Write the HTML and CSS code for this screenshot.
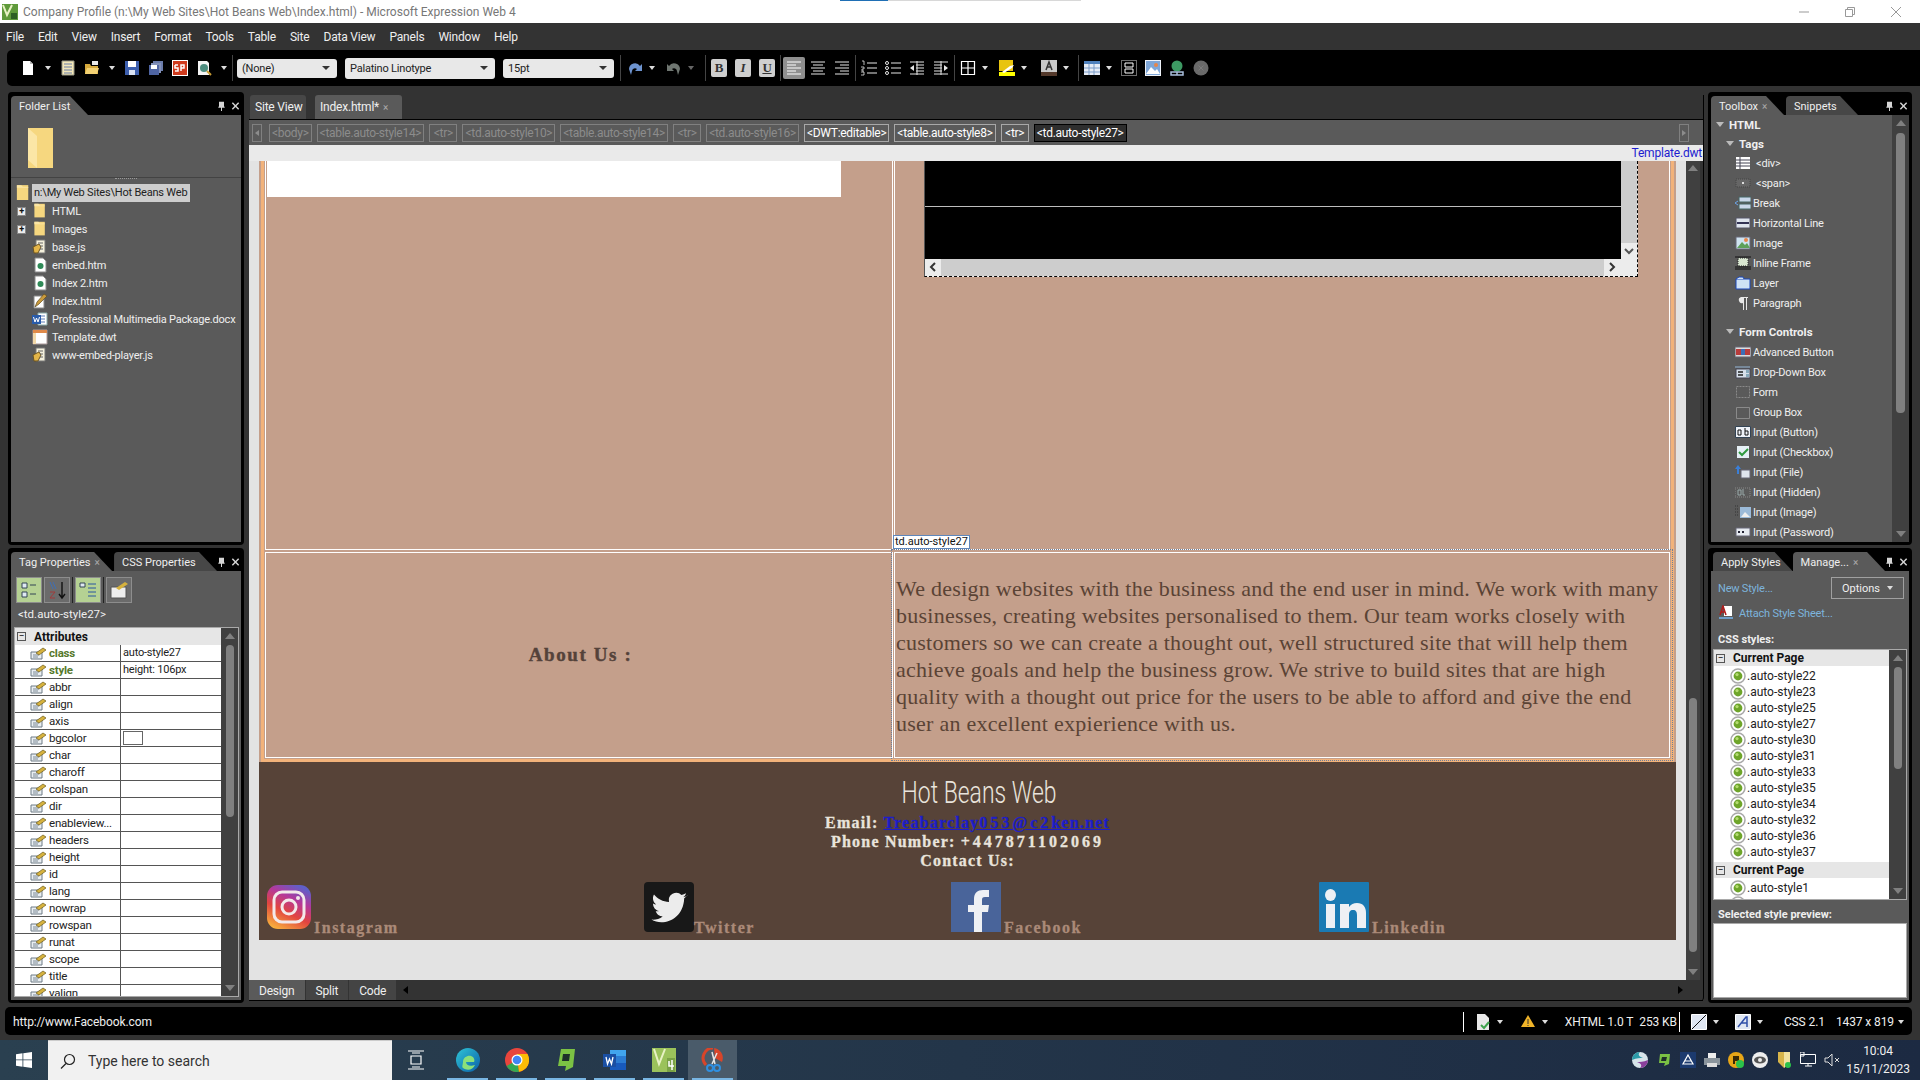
FILE: index.html
```html
<!DOCTYPE html>
<html>

<head>
    <meta charset="utf-8">
    <title>Company Profile - Microsoft Expression Web 4</title>
    <link rel="stylesheet" href="styles.css">
</head>

<body>
    <svg class="defs" aria-hidden="true">
        <symbol id="folder" viewBox="0 0 16 20"><path d="M1 1h13v17H1z" fill="#f6d77f" /><path d="M1 1h5l2 2h6v1H1z" fill="#fbe6a6" /></symbol>
        <symbol id="script" viewBox="0 0 16 16"><path d="M4 1h9v13H4z" fill="#f4f0dc" stroke="#777" /><path d="M1 8l6-3 2 3-3 6H2z" fill="#e3b548" stroke="#6b5320" /><path d="M6 4h5M8 7h3M8 10h3" stroke="#666" /></symbol>
        <symbol id="htm" viewBox="0 0 16 16"><path d="M3 1h8l3 3v11H3z" fill="#fff" stroke="#8a8a8a" /><circle cx="8.5" cy="9" r="3" fill="#2f8a57" /></symbol>
        <symbol id="html" viewBox="0 0 16 16"><path d="M2 3h10v12H2z" fill="#fff" stroke="#888" /><path d="M3 14l2-5 7-8 3 2-8 8z" fill="#c99a3c" stroke="#5e4a20" stroke-width=".7" /></symbol>
        <symbol id="docx" viewBox="0 0 16 16"><path d="M6 2h9v12H6z" fill="#fff" stroke="#8aa" /><path d="M8 5h5M8 8h5M8 11h5" stroke="#5a7db8" /><path d="M0 4h9v9H0z" fill="#2a5caa" /><path d="M1.5 6l1.5 5 1.5-4 1.5 4 1.5-5" stroke="#fff" fill="none" /></symbol>
        <symbol id="dwt" viewBox="0 0 16 16"><path d="M1 1h14v14H1z" fill="#fff" stroke="#a99" /><path d="M1 1h14v3H1z" fill="#e08a4a" /><path d="M1 4h3v11H1z" fill="#f3d9a8" /></symbol>
        <symbol id="attr" viewBox="0 0 17 13"><path d="M1 5h11v7H1z" fill="#e9eef2" stroke="#6d7a85" /><path d="M3 8h6M3 10h5" stroke="#7c8a96" /><path d="M6 6l7-5 3 2-7 5z" fill="#d6b23e" stroke="#6a5a1e" stroke-width=".7" /></symbol>
        <symbol id="ball" viewBox="0 0 16 16"><circle cx="8" cy="8" r="7" fill="#fff" stroke="#a9a9a9" stroke-width="1.5" /><circle cx="8" cy="8" r="4.4" fill="#6ea52a" /><circle cx="7" cy="6.6" r="1.6" fill="#b5dc71" /></symbol>
        <symbol id="pin" viewBox="0 0 10 12"><path d="M2 1h6v5l1 2H1l1-2zM4.4 8h1.2v4H4.4z" fill="#d5d5d5" /></symbol>
        <symbol id="close" viewBox="0 0 10 10"><path d="M1.5 1.5l7 7M8.5 1.5l-7 7" stroke="#d5d5d5" stroke-width="1.6" /></symbol>
    </svg>

    <div class="title-bar">
        <svg class="app-icon" viewBox="0 0 16 16"><path d="M0 0h16v16H0z" fill="#5f9a3a" /><path d="M1 1l4 10 5-10" fill="none" stroke="#e8f2c4" stroke-width="2" /><path d="M9 9h6v6H9z" fill="#2e5f24" /></svg>
        <span class="title-text">Company Profile (n:\My Web Sites\Hot Beans Web\Index.html) - Microsoft Expression Web 4</span>
        <div class="title-strip"><span class="strip-blue"></span><span class="strip-grey"></span></div>
        <div class="win-buttons">
            <svg viewBox="0 0 10 10"><path d="M0 5h10" stroke="#999" /></svg>
            <svg viewBox="0 0 10 10"><path d="M.5 2.5h7v7h-7zM2.5 2.5v-2h7v7h-2" fill="none" stroke="#999" /></svg>
            <svg viewBox="0 0 10 10"><path d="M0 0l10 10M10 0L0 10" stroke="#999" /></svg>
        </div>
    </div>

    <div class="menu-bar">
        <span>File</span><span>Edit</span><span>View</span><span>Insert</span><span>Format</span><span>Tools</span><span>Table</span><span>Site</span><span>Data View</span><span>Panels</span><span>Window</span><span>Help</span>
    </div>

    <div class="tool-bar">
        <svg class="ic" viewBox="0 0 16 16"><path d="M3 1h7l3 3v11H3z" fill="#fff" /><path d="M10 1v3h3" fill="#bbb" /></svg>
        <i class="ar"></i>
        <svg class="ic" viewBox="0 0 16 16"><path d="M2 1h12v14H2z" fill="#f2e6b8" stroke="#998" /><path d="M4 4h8M4 7h8M4 10h8M4 13h8" stroke="#6a7fa8" /></svg>
        <svg class="ic" viewBox="0 0 16 16"><path d="M1 4h5l1 2h7v8H1z" fill="#d6a93c" /><path d="M3 8h12l-2 6H1z" fill="#f2d173" /><path d="M8 1h6v4H8z" fill="#e8e8e8" /></svg>
        <i class="ar"></i>
        <svg class="ic" viewBox="0 0 16 16"><path d="M1 1h14v14H1z" fill="#3d5fae" /><path d="M4 1h8v6H4z" fill="#fff" /><path d="M5 10h6v5H5z" fill="#d9e2f3" /></svg>
        <svg class="ic" viewBox="0 0 16 16"><path d="M5 1h10v10H5z" fill="#6b7cab" /><path d="M3 3h10v10H3z" fill="#8391b8" /><path d="M1 5h10v10H1z" fill="#4f65a3" /><path d="M3 5h6v4H3z" fill="#fff" /></svg>
        <svg class="ic" viewBox="0 0 16 16"><path d="M0 0h16v16H0z" fill="#fff" /><path d="M1 1h14v14H1z" fill="#d03b1e" /><path d="M3 5h3M3 5v3h3v3H3M9 11V5h3v3H9" fill="none" stroke="#fff" stroke-width="1.5" /></svg>
        <svg class="ic" viewBox="0 0 16 16"><path d="M2 1h9l2 2v12H2z" fill="#f4f4f4" /><circle cx="8" cy="8" r="4" fill="#4d8d7f" /><path d="M11 11l4 4" stroke="#c79b33" stroke-width="2" /></svg>
        <i class="ar"></i>
        <i class="sep sep-file"></i>
        <div class="combo combo-none"><span>(None)</span><i class="ar-dark"></i></div>
        <div class="combo combo-font"><span>Palatino Linotype</span><i class="ar-dark"></i></div>
        <div class="combo combo-size"><span>15pt</span><i class="ar-dark"></i></div>
        <i class="sep sep-size"></i>
        <svg class="ic ic-tight" viewBox="0 0 16 16"><path d="M2 9a6 6 0 0 1 11-3l2-2v7H8l2-2a3 3 0 0 0-5 2l-1 4z" fill="#6d93cf" /></svg>
        <i class="ar ar-wide"></i>
        <svg class="ic ic-tight ic-dim" viewBox="0 0 16 16"><path d="M14 9A6 6 0 0 0 3 6L1 4v7h7L6 9a3 3 0 0 1 5 2l1 4z" fill="#6f7671" /></svg>
        <i class="ar ar-dim ar-wide"></i>
        <i class="sep sep-fmt"></i>
        <span class="fmt fmt-b">B</span><span class="fmt fmt-i">I</span><span class="fmt fmt-u">U</span>
        <i class="sep sep-near"></i>
        <svg class="al al-on" viewBox="0 0 22 22"><path d="M4 5h14M4 8h9M4 11h14M4 14h9M4 17h14" stroke="#fff" /></svg>
        <svg class="ic ic-al" viewBox="0 0 16 16"><path d="M1 2h14M3 5h10M1 8h14M3 11h10M1 14h14" stroke="#e6e6e6" /></svg>
        <svg class="ic" viewBox="0 0 16 16"><path d="M1 2h14M6 5h9M1 8h14M6 11h9M1 14h14" stroke="#e6e6e6" /></svg>
        <i class="sep sep-list"></i>
        <svg class="ic" viewBox="0 0 16 16"><path d="M6 3h10M6 8h10M6 13h10" stroke="#e6e6e6" /><path d="M1 1h2v4M0 7h3v2H1v2h2M0 12h3v3H0" fill="none" stroke="#e6e6e6" stroke-width=".8" /></svg>
        <svg class="ic" viewBox="0 0 16 16"><path d="M6 3h10M6 8h10M6 13h10" stroke="#e6e6e6" /><circle cx="2" cy="3" r="1.5" fill="none" stroke="#e6e6e6" /><circle cx="2" cy="8" r="1.5" fill="none" stroke="#e6e6e6" /><circle cx="2" cy="13" r="1.5" fill="none" stroke="#e6e6e6" /></svg>
        <svg class="ic" viewBox="0 0 16 16"><path d="M1 2h14M7 5h8M7 8h8M7 11h8M1 14h14M8 1v14" stroke="#e6e6e6" /><path d="M5 5L1 8l4 3z" fill="#e6e6e6" /></svg>
        <svg class="ic" viewBox="0 0 16 16"><path d="M1 2h14M1 5h8M1 8h8M1 11h8M1 14h14M8 1v14" stroke="#e6e6e6" /><path d="M11 5l4 3-4 3z" fill="#e6e6e6" /></svg>
        <i class="sep sep-list"></i>
        <svg class="ic ic-tight" viewBox="0 0 16 16"><path d="M1.5 1.5h13v13h-13zM8 1.5v13M1.5 8h13" fill="none" stroke="#fff" stroke-width="1.2" /></svg>
        <i class="ar ar-wide"></i>
        <svg class="ic ic-tight" viewBox="0 0 16 16"><path d="M0 0h14v11H0z" fill="#e8c40f" /><path d="M0 12h16v4H0z" fill="#ff0" /><path d="M5 13l8-5 2-3-4 1-8 6z" fill="#fff" /></svg>
        <i class="ar ar-wider"></i>
        <svg class="ic ic-tight" viewBox="0 0 16 16"><path d="M0 0h16v12H0z" fill="#c9c9c9" /><path d="M0 12h16v4H0z" fill="#54392b" /><path d="M5 10l3-8 3 8M6 7h4" fill="none" stroke="#333" stroke-width="1.5" /></svg>
        <i class="ar ar-wide"></i>
        <i class="sep"></i>
        <svg class="ic ic-tight" viewBox="0 0 16 16"><path d="M0 1h16v14H0z" fill="#e6ecf6" /><path d="M0 1h16v3H0z" fill="#4f81bd" /><path d="M5 4v11M10 4v11M0 8h16M0 12h16" stroke="#7b9cc8" /></svg>
        <i class="ar"></i>
        <svg class="ic" viewBox="0 0 16 16"><path d="M.5.5h15v15H.5z" fill="none" stroke="#ddd" stroke-dasharray="1 1" /><path d="M4 3h8v4H4zM4 9h8v4H4z" fill="none" stroke="#fff" /></svg>
        <svg class="ic" viewBox="0 0 16 16"><path d="M0 0h16v16H0z" fill="#eef2f8" /><path d="M1 1h14v14H1z" fill="#7fa7d8" /><path d="M1 14l5-7 4 4 2-2 3 5z" fill="#fff" /><circle cx="11" cy="5" r="2" fill="#e8864a" /></svg>
        <svg class="ic" viewBox="0 0 16 16"><circle cx="8" cy="6" r="5.5" fill="#3d9a63" /><path d="M2 12h6v3H2zM8 12h6v3H8z" fill="none" stroke="#a9bfdc" stroke-width="1.5" /></svg>
        <svg class="ic" viewBox="0 0 16 16"><circle cx="8" cy="8" r="7.5" fill="#6a6a6a" /><path d="M5.5 5.5l5 5M10.5 5.5l-5 5" stroke="#7c7c7c" /></svg>
    </div>

    <div class="main">
        <div class="side side-left">
            <div class="panel">
                <div class="panel-tabs">
                    <span class="ptab ptab-on ptab-folder">Folder List</span>
                    <span class="ptab-tools"><svg><use href="#pin" /></svg><svg><use href="#close" /></svg></span>
                </div>
                <div class="panel-body folder-body">
                    <div class="folder-top"><svg class="big-folder" viewBox="0 0 28 42"><path d="M1 1l25 0v40H1z" fill="#f6d77f" /><path d="M1 1l9 8v32L1 33z" fill="#fbe6a6" /></svg></div>
                    <div class="grip"></div>
                    <div class="tree">
                        <div class="tree-root"><svg class="ti"><use href="#folder" /></svg><span class="root-label">n:\My Web Sites\Hot Beans Web</span></div>
                        <div class="tree-row"><i class="expand">+</i><svg class="ti"><use href="#folder" /></svg>HTML</div>
                        <div class="tree-row"><i class="expand">+</i><svg class="ti"><use href="#folder" /></svg>Images</div>
                        <div class="tree-row"><svg class="ti"><use href="#script" /></svg>base.js</div>
                        <div class="tree-row"><svg class="ti"><use href="#htm" /></svg>embed.htm</div>
                        <div class="tree-row"><svg class="ti"><use href="#htm" /></svg>Index 2.htm</div>
                        <div class="tree-row"><svg class="ti"><use href="#html" /></svg>Index.html</div>
                        <div class="tree-row"><svg class="ti"><use href="#docx" /></svg>Professional Multimedia Package.docx</div>
                        <div class="tree-row"><svg class="ti"><use href="#dwt" /></svg>Template.dwt</div>
                        <div class="tree-row"><svg class="ti"><use href="#script" /></svg>www-embed-player.js</div>
                    </div>
                </div>
            </div>
            <div class="panel">
                <div class="panel-tabs">
                    <span class="ptab ptab-on ptab-tagprops">Tag Properties <b class="tab-x">×</b></span>
                    <span class="ptab ptab-off ptab-cssprops">CSS Properties</span>
                    <span class="ptab-tools"><svg><use href="#pin" /></svg><svg><use href="#close" /></svg></span>
                </div>
                <div class="panel-body">
                    <div class="prop-tools">
                        <span class="pt pt-on"><svg viewBox="0 0 24 24"><path d="M5 5h5v5H5zM5 14h5v5H5z" fill="#dfe9f2" stroke="#345" /><path d="M13 7h6M13 16h6" stroke="#345" /></svg></span>
                        <span class="pt"><svg viewBox="0 0 24 24"><path d="M5 4l3 7M8 4l3 7" stroke="#3f6fb5" /><path d="M5 14h5l-5 6h5" fill="none" stroke="#a23a3a" /><path d="M17 4v15M14 16l3 4 3-4" fill="none" stroke="#111" stroke-width="1.4" /></svg></span>
                        <i class="pt-sep"></i>
                        <span class="pt pt-on"><svg viewBox="0 0 24 24"><path d="M4 5h5v4H4z" fill="#dfe9f2" stroke="#345" /><path d="M12 6h8M12 10h8M12 14h8M12 18h8" stroke="#2a56a0" /></svg></span>
                        <i class="pt-sep"></i>
                        <span class="pt"><svg viewBox="0 0 24 24"><path d="M4 9h15v11H4z" fill="#eee" stroke="#555" /><path d="M9 10l9-6 3 2-9 6z" fill="#d6b23e" /></svg></span>
                    </div>
                    <div class="sel-tag">&lt;td.auto-style27&gt;</div>
                    <div class="prop-box">
                        <div class="prop-list">
                            <div class="group-head"><i class="minus">−</i>Attributes</div>
                            <div class="prow"><span class="pname set"><svg><use href="#attr" /></svg>class</span><span class="pval">auto-style27</span></div>
                            <div class="prow"><span class="pname set"><svg><use href="#attr" /></svg>style</span><span class="pval">height: 106px</span></div>
                            <div class="prow"><span class="pname"><svg><use href="#attr" /></svg>abbr</span><span class="pval"></span></div>
                            <div class="prow"><span class="pname"><svg><use href="#attr" /></svg>align</span><span class="pval"></span></div>
                            <div class="prow"><span class="pname"><svg><use href="#attr" /></svg>axis</span><span class="pval"></span></div>
                            <div class="prow"><span class="pname"><svg><use href="#attr" /></svg>bgcolor</span><span class="pval"><i class="swatch"></i></span></div>
                            <div class="prow"><span class="pname"><svg><use href="#attr" /></svg>char</span><span class="pval"></span></div>
                            <div class="prow"><span class="pname"><svg><use href="#attr" /></svg>charoff</span><span class="pval"></span></div>
                            <div class="prow"><span class="pname"><svg><use href="#attr" /></svg>colspan</span><span class="pval"></span></div>
                            <div class="prow"><span class="pname"><svg><use href="#attr" /></svg>dir</span><span class="pval"></span></div>
                            <div class="prow"><span class="pname"><svg><use href="#attr" /></svg>enableview...</span><span class="pval"></span></div>
                            <div class="prow"><span class="pname"><svg><use href="#attr" /></svg>headers</span><span class="pval"></span></div>
                            <div class="prow"><span class="pname"><svg><use href="#attr" /></svg>height</span><span class="pval"></span></div>
                            <div class="prow"><span class="pname"><svg><use href="#attr" /></svg>id</span><span class="pval"></span></div>
                            <div class="prow"><span class="pname"><svg><use href="#attr" /></svg>lang</span><span class="pval"></span></div>
                            <div class="prow"><span class="pname"><svg><use href="#attr" /></svg>nowrap</span><span class="pval"></span></div>
                            <div class="prow"><span class="pname"><svg><use href="#attr" /></svg>rowspan</span><span class="pval"></span></div>
                            <div class="prow"><span class="pname"><svg><use href="#attr" /></svg>runat</span><span class="pval"></span></div>
                            <div class="prow"><span class="pname"><svg><use href="#attr" /></svg>scope</span><span class="pval"></span></div>
                            <div class="prow"><span class="pname"><svg><use href="#attr" /></svg>title</span><span class="pval"></span></div>
                            <div class="prow"><span class="pname"><svg><use href="#attr" /></svg>valign</span><span class="pval"></span></div>
                        </div>
                        <div class="vbar vbar-prop"><i class="up"></i><i class="thumb"></i><i class="down"></i></div>
                    </div>
                </div>
            </div>
        </div>

        <div class="editor">
            <div class="doc-tabs">
                <span class="doc-tab">Site View</span>
                <span class="doc-tab doc-tab-on">Index.html* <b class="tab-x">×</b></span>
            </div>
            <div class="crumbs">
                <span class="crumb crumb-arrow"></span>
                <span class="crumb">&lt;body&gt;</span>
                <span class="crumb">&lt;table.auto-style14&gt;</span>
                <span class="crumb crumb-tr">&lt;tr&gt;</span>
                <span class="crumb">&lt;td.auto-style10&gt;</span>
                <span class="crumb">&lt;table.auto-style14&gt;</span>
                <span class="crumb crumb-tr">&lt;tr&gt;</span>
                <span class="crumb">&lt;td.auto-style16&gt;</span>
                <span class="crumb crumb-on">&lt;DWT:editable&gt;</span>
                <span class="crumb crumb-on">&lt;table.auto-style8&gt;</span>
                <span class="crumb crumb-on crumb-tr">&lt;tr&gt;</span>
                <span class="crumb crumb-sel">&lt;td.auto-style27&gt;</span>
                <span class="crumb crumb-end"></span>
            </div>
            <div class="template-row"><span>Template.dwt</span></div>
            <div class="work">
                <div class="canvas">
                    <div class="page">
                        <div class="frame">
                            <div class="cell cell-top-left"><div class="white-block"></div></div>
                            <div class="cell cell-top-right">
                                <div class="embed">
                                    <div class="embed-row">
                                        <div class="embed-video"><i class="embed-line"></i></div>
                                        <div class="embed-vbar"><span class="embed-btn">
                                            <svg viewBox="0 0 10 10"><path d="M1 3l4 4 4-4" fill="none" stroke="#555" stroke-width="2" /></svg></span></div>
                                    </div>
                                    <div class="embed-hbar">
                                        <span class="embed-btn"><svg viewBox="0 0 10 10"><path d="M7 1L3 5l4 4" fill="none" stroke="#333" stroke-width="2" /></svg></span>
                                        <i class="embed-track"></i>
                                        <span class="embed-btn"><svg viewBox="0 0 10 10"><path d="M3 1l4 4-4 4" fill="none" stroke="#333" stroke-width="2" /></svg></span>
                                        <span class="embed-corner"></span>
                                    </div>
                                </div>
                            </div>
                            <div class="cell cell-about">About Us :</div>
                            <div class="cell cell-text">
                                <span class="cell-badge">td.auto-style27</span>
                                <p>We design websites with the business and the end user in mind. We work with many businesses, creating websites personalised to them. Our team works closely with customers so we can create a thought out, well structured site that will help them achieve goals and help the business grow. We strive to build sites that are high quality with a thought out price for the users to be able to afford and give the end user an excellent expierience with us.</p>
                            </div>
                        </div>
                        <div class="footer">
                            <h1 class="brand"><span>Hot Beans Web</span></h1>
                            <div class="contact">Email: <a href="#">Treabarclay<span class="num">053@c2</span>ken.net</a></div>
                            <div class="contact">Phone Number: <span class="num">+447871102069</span></div>
                            <div class="contact">Contact Us:</div>
                            <div class="socials">
                                <div class="social">
                                    <svg class="logo-ig" viewBox="0 0 44 44">
                                        <defs><linearGradient id="iggrad" x1="0.2" y1="1" x2="0.7" y2="0"><stop offset="0" stop-color="#f9b13c" /><stop offset=".4" stop-color="#e2453f" /><stop offset=".7" stop-color="#b5389a" /><stop offset="1" stop-color="#5f5fc8" /></linearGradient></defs>
                                        <rect width="44" height="44" rx="11" fill="url(#iggrad)" />
                                        <rect x="7" y="7" width="30" height="30" rx="8" fill="none" stroke="#f3e9ea" stroke-width="3" />
                                        <circle cx="22" cy="22" r="7" fill="none" stroke="#f3e9ea" stroke-width="3" />
                                        <circle cx="31" cy="13" r="2" fill="#f3e9ea" />
                                    </svg>
                                    <span>Instagram</span>
                                </div>
                                <div class="social social-twitter">
                                    <svg class="logo" viewBox="0 0 50 50">
                                        <rect width="50" height="50" rx="4" fill="#181818" />
                                        <path d="M43 14c-1.500.7-3 1-4 1.200 1.500-1 2.700-2.400 3-4-1.400.8-3 1.400-4.500 1.700A7.500 7.500 0 0 0 25 20c-6-.3-11.500-3.200-15-7.500-2 3.300-1 7.700 2.300 10-1.200 0-2.400-.4-3.300-1 0 3.700 2.500 6.800 6 7.600-1 .3-2.200.3-3.300.1 1 3 3.800 5.200 7 5.200-3.300 2.500-7.400 3.600-11.200 3.200 11.500 7.400 32-.2 32.700-21.400 1.500-1 2.800-2.300 3.800-3.700z" fill="#ececec" />
                                    </svg>
                                    <span>Twitter</span>
                                </div>
                                <div class="social">
                                    <svg class="logo" viewBox="0 0 50 50">
                                        <rect width="50" height="50" fill="#49649a" />
                                        <path d="M23 50V30h-6v-7h6v-6c0-6 3.500-9 9-9h6v7h-4c-2.500 0-3 1-3 3v5h7l-1 7h-6v20z" fill="#eef0f4" />
                                    </svg>
                                    <span>Facebook</span>
                                </div>
                                <div class="social">
                                    <svg class="logo" viewBox="0 0 50 50">
                                        <rect width="50" height="50" rx="1" fill="#1a7ab3" />
                                        <ellipse cx="11.500" cy="13" rx="5.500" ry="6" fill="#eef0f4" />
                                        <path d="M7 22h9v24H7zM21 22h9v3c2-2.500 4.500-4 8-4 6 0 9 4 9 10v15h-9V33c0-3-1-5-4-5s-4 2-4 5v13h-9z" fill="#eef0f4" />
                                    </svg>
                                    <span>Linkedin</span>
                                </div>
                            </div>
                        </div>
                    </div>
                </div>
                <div class="vbar vbar-editor"><i class="up"></i><i class="thumb"></i><i class="down"></i></div>
            </div>
            <div class="view-bar">
                <span class="view view-on">Design</span>
                <span class="view">Split</span>
                <span class="view">Code</span>
                <i class="tri-left"></i>
                <i class="tri-right"></i>
            </div>
        </div>

        <div class="side side-right">
            <div class="panel">
                <div class="panel-tabs">
                    <span class="ptab ptab-on ptab-toolbox">Toolbox <b class="tab-x">×</b></span>
                    <span class="ptab ptab-off ptab-snippets">Snippets</span>
                    <span class="ptab-tools"><svg><use href="#pin" /></svg><svg><use href="#close" /></svg></span>
                </div>
                <div class="panel-body toolbox-body">
                    <div class="toolbox-list">
                        <div class="tb-head tb-head-html"><i class="tree-tri"></i>HTML</div>
                        <div class="tb-head tb-head-sub"><i class="tree-tri"></i>Tags</div>
                        <div class="tb-row tb-row-in"><svg viewBox="0 0 16 14"><path d="M1 1h14v12H1z" fill="#fff" /><path d="M1 4h14M1 7h14M1 10h14M5 1v12" stroke="#445" /></svg>&lt;div&gt;</div>
                        <div class="tb-row tb-row-in"><svg viewBox="0 0 16 14"><path d="M1 3h14v8H1z" fill="#666" stroke="#444" stroke-dasharray="1 1" /><path d="M7 6h2v2H7z" fill="#ddd" /></svg>&lt;span&gt;</div>
                        <div class="tb-row"><svg viewBox="0 0 16 14"><path d="M4 1h12v5H4zM4 8h12v5H4z" fill="#c9d7ea" stroke="#466" /><path d="M3 5L0 7l3 2" fill="none" stroke="#6ba4e8" /></svg>Break</div>
                        <div class="tb-row"><svg viewBox="0 0 16 14"><path d="M1 2h14v10H1z" fill="#dfe5ee" stroke="#556" /><path d="M2 7h12" stroke="#335" stroke-width="2" /></svg>Horizontal Line</div>
                        <div class="tb-row"><svg viewBox="0 0 16 14"><path d="M1 1h14v12H1z" fill="#cfe3f0" stroke="#667" /><path d="M2 12l5-6 3 3 2-2 3 5z" fill="#5da05a" /><circle cx="11" cy="4" r="2" fill="#e8864a" /></svg>Image</div>
                        <div class="tb-row"><svg viewBox="0 0 16 14"><path d="M0 1h16M0 13h16M0 11h16" stroke="#111" /><path d="M3 2h10v8H3z" fill="#d8e6d0" stroke="#222" stroke-dasharray="1 1" /></svg>Inline Frame</div>
                        <div class="tb-row"><svg viewBox="0 0 16 14"><path d="M1 3h14v10H1z" fill="#cfe2f5" stroke="#1a46b8" /><path d="M1 3l3-2h4l1 2" fill="#cfe2f5" stroke="#1a46b8" /></svg>Layer</div>
                        <div class="tb-row"><svg viewBox="0 0 16 14"><path d="M6 1h7v1h-1v12h-1V2H9v12H8V7a3 3 0 0 1-2-6z" fill="#e8e8e8" /></svg>Paragraph</div>
                        <div class="tb-head tb-head-sub tb-head-form"><i class="tree-tri"></i>Form Controls</div>
                        <div class="tb-row"><svg viewBox="0 0 16 14"><path d="M0 2h16v10H0z" fill="#ddd" stroke="#667" /><path d="M1 4h14v6H1z" fill="#b83c3c" /><path d="M6 4h4v6H6z" fill="#3c6eb8" /></svg>Advanced Button</div>
                        <div class="tb-row"><svg viewBox="0 0 16 14"><path d="M0 1h15v2H0z" fill="#789" /><path d="M1 4h14v9H1z" fill="#d7e0ea" stroke="#445" /><path d="M3 7h5M3 10h5" stroke="#222" stroke-width="1.5" /><path d="M11 5h3v3h-3zM11 9h3v3h-3z" fill="#8ab" /></svg>Drop-Down Box</div>
                        <div class="tb-row"><svg viewBox="0 0 16 14"><path d="M1.500 1.500h13v11h-13z" fill="none" stroke="#8a8a8a" stroke-dasharray="2 1" /></svg>Form</div>
                        <div class="tb-row"><svg viewBox="0 0 16 14"><path d="M1.500 2.500h13v11h-13z" fill="none" stroke="#8a8a8a" /></svg>Group Box</div>
                        <div class="tb-row"><svg viewBox="0 0 16 14"><path d="M.5 1.500h15v11H.5z" fill="#eef2f8" stroke="#345" /><path d="M3 5h3v5H3zM10 3v7h3V6h-3" fill="none" stroke="#111" /></svg>Input (Button)</div>
                        <div class="tb-row"><svg viewBox="0 0 16 14"><path d="M2 1h12v12H2z" fill="#e6f0f6" /><path d="M4 7l3 3 6-6" fill="none" stroke="#2f9a3f" stroke-width="2" /></svg>Input (Checkbox)</div>
                        <div class="tb-row"><svg viewBox="0 0 16 14"><path d="M6 5h9v8H6z" fill="#dfe5ee" stroke="#667" /><path d="M3 0L0 4h2v5h2V4h2z" fill="#3a7fd8" /></svg>Input (File)</div>
                        <div class="tb-row"><svg viewBox="0 0 16 14"><path d="M0 3h15v9H0z" fill="none" stroke="#888" stroke-dasharray="1 1" /><path d="M3 5h3v5H3zM8 4v6h2" fill="none" stroke="#9aa" /></svg>Input (Hidden)</div>
                        <div class="tb-row"><svg viewBox="0 0 16 14"><path d="M5 2h11v11H5z" fill="#9bbad8" /><path d="M0 1h4M0 4h4M0 7h4M0 10h4" stroke="#333" stroke-dasharray="1 1" /><path d="M6 12l4-5 5 5z" fill="#eee" /></svg>Input (Image)</div>
                        <div class="tb-row"><svg viewBox="0 0 16 14"><path d="M1 3h14v8H1z" fill="#e6eaf0" stroke="#667" /><path d="M3 6l2 2M5 6L3 8M7 6l2 2M9 6L7 8" stroke="#223" /></svg>Input (Password)</div>
                    </div>
                    <div class="vbar vbar-toolbox"><i class="up"></i><i class="thumb"></i><i class="down"></i></div>
                </div>
            </div>
            <div class="panel">
                <div class="panel-tabs">
                    <span class="ptab ptab-off ptab-apply">Apply Styles</span>
                    <span class="ptab ptab-on ptab-manage">Manage... <b class="tab-x">×</b></span>
                    <span class="ptab-tools"><svg><use href="#pin" /></svg><svg><use href="#close" /></svg></span>
                </div>
                <div class="panel-body manage-body">
                    <div class="manage-top"><span class="link-blue">New Style...</span><span class="options-btn">Options<i class="ar"></i></span></div>
                    <div class="attach"><svg viewBox="0 0 16 16"><path d="M6 1h8v10H6z" fill="#fff" /><path d="M2 10l3-9 3 9M3 7h4" fill="none" stroke="#b01c1c" stroke-width="1.5" /><path d="M1 13h14" stroke="#6f9ec9" stroke-width="2" /></svg><span class="link-blue">Attach Style Sheet...</span></div>
                    <div class="mini-head">CSS styles:</div>
                    <div class="css-box">
                        <div class="css-list">
                            <div class="group-head group-head-css"><i class="minus">−</i>Current Page</div>
                            <div class="css-row"><svg><use href="#ball" /></svg>.auto-style22</div>
                            <div class="css-row"><svg><use href="#ball" /></svg>.auto-style23</div>
                            <div class="css-row"><svg><use href="#ball" /></svg>.auto-style25</div>
                            <div class="css-row"><svg><use href="#ball" /></svg>.auto-style27</div>
                            <div class="css-row"><svg><use href="#ball" /></svg>.auto-style30</div>
                            <div class="css-row"><svg><use href="#ball" /></svg>.auto-style31</div>
                            <div class="css-row"><svg><use href="#ball" /></svg>.auto-style33</div>
                            <div class="css-row"><svg><use href="#ball" /></svg>.auto-style35</div>
                            <div class="css-row"><svg><use href="#ball" /></svg>.auto-style34</div>
                            <div class="css-row"><svg><use href="#ball" /></svg>.auto-style32</div>
                            <div class="css-row"><svg><use href="#ball" /></svg>.auto-style36</div>
                            <div class="css-row"><svg><use href="#ball" /></svg>.auto-style37</div>
                            <div class="group-head group-head-css"><i class="minus">−</i>Current Page</div>
                            <div class="css-row"><svg><use href="#ball" /></svg>.auto-style1</div>
                            <div class="css-row"><svg><use href="#ball" /></svg></div>
                        </div>
                        <div class="vbar vbar-css"><i class="up"></i><i class="thumb"></i><i class="down"></i></div>
                    </div>
                    <div class="mini-head mini-head-preview">Selected style preview:</div>
                    <div class="preview-box"></div>
                </div>
            </div>
        </div>
    </div>

    <div class="status-bar">
        <span class="status-url">http://www.Facebook.com</span>
        <i class="status-sep"></i>
        <svg class="st-ic" viewBox="0 0 16 16"><path d="M2 0h8l4 4v12H2z" fill="#e8e8e8" /><path d="M6 11l3 3 5-6" fill="none" stroke="#3fa34d" stroke-width="2" /></svg>
        <i class="ar"></i>
        <svg class="st-ic st-warn" viewBox="0 0 16 16"><path d="M8 1l7 12H1z" fill="#f0b429" /><path d="M8 5v5M8 11v1" stroke="#333" /></svg>
        <i class="ar"></i>
        <span class="st-text st-xhtml">XHTML 1.0 T</span>
        <span class="st-text st-size">253 KB</span>
        <i class="status-sep status-sep-b"></i>
        <svg class="st-ic" viewBox="0 0 16 16"><path d="M.5.5h15v15H.5z" fill="#dfe6f2" stroke="#fff" /><path d="M1 15L15 1" stroke="#111" /></svg>
        <i class="ar"></i>
        <svg class="st-ic st-box" viewBox="0 0 16 16"><path d="M.5.5h15v15H.5z" fill="#dfe6f2" stroke="#fff" /><path d="M3 13L11 3h1v10M6 9h6" fill="none" stroke="#2f4fa8" stroke-width="1.5" /></svg>
        <i class="ar"></i>
        <span class="st-text st-css">CSS 2.1</span>
        <span class="st-text st-dim">1437 x 819</span>
        <i class="ar ar-last"></i>
    </div>

    <div class="task-bar">
        <svg class="start" viewBox="0 0 16 16"><path d="M0 2.200l6.500-.9V7.500H0zM7.300 1.200L16 0v7.500H7.300zM0 8.300h6.500v6.400L0 13.800zM7.300 8.300H16V16l-8.700-1.200z" fill="#fff" /></svg>
        <div class="search"><svg viewBox="0 0 16 16"><circle cx="9.500" cy="6.500" r="5" fill="none" stroke="#222" stroke-width="1.200" /><path d="M6 10.500L1 15.500" stroke="#222" stroke-width="1.200" /></svg><span>Type here to search</span></div>
        <svg class="task-view" viewBox="0 0 16 20"><path d="M3 6h10v8H3zM0 1h16M4 3h8M0 19h16M4 17h8" fill="none" stroke="#fff" stroke-width="1.200" /></svg>
        <div class="apps">
            <span class="app app-run"><svg viewBox="0 0 24 24"><defs><linearGradient id="edgegrad" x1="0" y1="0" x2="1" y2="1"><stop offset="0" stop-color="#2fc5d6" /><stop offset="1" stop-color="#0b5fa8" /></linearGradient></defs><circle cx="12" cy="12" r="12" fill="url(#edgegrad)" /><path d="M7 14c0-5 5-7 8-6 3 1 4 4 3 6H10c0 3 4 5 9 3-2 5-8 6-12 3-1.500-1.500 0-4 0-6z" fill="#8be07a" /></svg></span>
            <span class="app app-run"><svg viewBox="0 0 24 24"><circle cx="12" cy="12" r="12" fill="#e8453c" /><path d="M12 12L1.600 18A12 12 0 0 0 14 23.800z" fill="#34a853" /><path d="M12 6h10.500A12 12 0 0 1 14 23.800z" fill="#fbbc05" /><circle cx="12" cy="12" r="5.500" fill="#fff" /><circle cx="12" cy="12" r="4.300" fill="#4285f4" /></svg></span>
            <span class="app app-run"><svg viewBox="0 0 24 24"><path d="M7 1h14l-2 18-8 4 1-5H4z" fill="#7bc144" /><path d="M9 6h7l-1 7H8z" fill="#1e2f2a" /></svg></span>
            <span class="app app-run"><svg viewBox="0 0 24 24"><path d="M7 2h16v20H7z" fill="#2b7cd3" /><path d="M7 2h16v6H7z" fill="#41a5ee" /><path d="M7 15h16v7H7z" fill="#185abd" /><path d="M0 6h13v13H0z" fill="#1a4fa3" /><path d="M3 9l1.500 7 2-5 2 5L10 9" fill="none" stroke="#fff" stroke-width="1.300" /></svg></span>
            <span class="app app-run"><svg viewBox="0 0 24 24"><path d="M0 0h24v24H0z" fill="#9bc25b" /><path d="M2 1l5 15 6-15" fill="none" stroke="#e8f2c4" stroke-width="2" /><path d="M15 10h8v14h-8z" fill="#7aa246" /><path d="M17 13v5h5M20 12v10" fill="none" stroke="#fff" stroke-width="1.500" /></svg></span>
            <span class="app app-run app-active"><svg viewBox="0 0 24 24"><path d="M12 0a10 10 0 0 1 9 14L14 10l-1-10z" fill="#d8452a" /><path d="M12 0a10 10 0 0 0-7 17" fill="none" stroke="#d8452a" stroke-width="3" /><path d="M11 4l3 12M16 5l-5 11" stroke="#e5e5e5" stroke-width="1.500" /><circle cx="9" cy="20" r="3" fill="none" stroke="#2f8fe0" stroke-width="2" /><circle cx="16" cy="20" r="3" fill="none" stroke="#2f8fe0" stroke-width="2" /></svg></span>
        </div>
        <div class="tray">
            <svg viewBox="0 0 16 16"><circle cx="8" cy="8" r="8" fill="#d7e4ea" /><path d="M0 8a8 8 0 0 1 8-8c-3 3 0 5 3 6-3 0-6 0-11 2z" fill="#2c9aa8" /><path d="M16 8a8 8 0 0 1-8 8c3-3 0-5-3-6 3 0 6 0 11-2z" fill="#8a3f9c" /></svg>
            <svg viewBox="0 0 16 16"><path d="M4 2h10l-1 10-5 2 1-3H3z" fill="#7bc144" /><path d="M6 5h5l-1 4H5z" fill="#1e2f2a" /></svg>
            <svg viewBox="0 0 16 16"><path d="M0 0h16v16H0z" fill="#1c3a6e" /><path d="M8 3l5 9H3zM5 9h6" fill="none" stroke="#fff" stroke-width="1.200" /></svg>
            <svg viewBox="0 0 16 16"><path d="M4 1h8v5H4z" fill="#eee" /><path d="M0 6h16v7H0z" fill="#8a949c" /><path d="M3 11h10v4H3z" fill="#ddd" /></svg>
            <svg viewBox="0 0 16 16"><circle cx="8" cy="8" r="8" fill="#e8a617" /><path d="M5 4h6v5H7v3H5z" fill="#3a2a05" /><circle cx="12" cy="12" r="4" fill="#2bc24a" /></svg>
            <svg viewBox="0 0 16 16"><circle cx="8" cy="8" r="8" fill="#eee" /><ellipse cx="8" cy="8" rx="6" ry="3.500" fill="#555" /><circle cx="8" cy="8" r="2" fill="#eee" /></svg>
            <svg viewBox="0 0 16 16"><path d="M2 0h12v10l-6 6-6-6z" fill="#d8b54a" /><path d="M8 0h6v10l-6 6z" fill="#f3e3a0" /><circle cx="12" cy="13" r="3" fill="#2bc24a" /></svg>
            <svg viewBox="0 0 16 16"><path d="M.5 2.500h15v9H.5zM0 0h4v4H0zM5 14h7M8 12v2" fill="none" stroke="#fff" /></svg>
            <svg class="tray-vol" viewBox="0 0 16 16"><path d="M1 6h3l4-4v12l-4-4H1z" fill="none" stroke="#ddd" /><path d="M11 6l4 4M15 6l-4 4" stroke="#ddd" /></svg>
            <div class="clock"><span>10:04</span><span>15/11/2023</span></div>
        </div>
    </div>
</body>

</html>
```

FILE: styles.css
```css
* {
    box-sizing: border-box;
}

html,
body {
    margin: 0;
    height: 100%;
}

body {
    display: flex;
    flex-direction: column;
    width: 1920px;
    height: 1080px;
    overflow: hidden;
    background-color: #333333;
    color: #efefef;
    font-family: Roboto, "Liberation Sans", sans-serif;
    font-size: 11px;
    letter-spacing: -0.2px;
}

i {
    font-style: normal;
}

.defs {
    position: absolute;
    width: 0;
    height: 0;
}

/* title + menu */

.title-bar {
    display: flex;
    align-items: center;
    flex: none;
    height: 23px;
    padding-left: 2px;
    background-color: white;
    color: #777777;
    font-size: 12px;
    letter-spacing: 0;
    position: relative;
}

.app-icon {
    width: 16px;
    height: 16px;
    margin-right: 5px;
}

.title-strip {
    position: absolute;
    top: 0;
    left: 840px;
    display: flex;
    height: 1px;
}

.strip-blue {
    width: 48px;
    background-color: #1f6fb5;
}

.strip-grey {
    width: 193px;
    background-color: #d8d8d8;
}

.win-buttons {
    display: flex;
    gap: 36px;
    margin-left: auto;
    margin-right: 19px;
}

.win-buttons svg {
    width: 10px;
    height: 10px;
}

.menu-bar {
    display: flex;
    align-items: center;
    flex: none;
    gap: 14px;
    height: 27px;
    padding-left: 6px;
    font-size: 12px;
    letter-spacing: -0.2px;
}

.tool-bar {
    display: flex;
    align-items: center;
    flex: none;
    height: 36px;
    margin-left: 7px;
    padding-left: 13px;
    background-color: black;
    border-radius: 5px 0 0 5px;
}

.ic {
    flex: none;
    width: 16px;
    height: 16px;
    margin-right: 8px;
}

.ic-tight {
    margin-right: 5px;
}

.ic-al {
    margin-left: 5px;
    margin-right: 8px;
}

.ar {
    display: inline-block;
    flex: none;
    width: 0;
    height: 0;
    margin: 0 9px 0 1px;
    border-style: solid;
    border-width: 4px 3.500px 0;
    border-color: #dddddd transparent transparent;
}

.ar-wide {
    margin-right: 11px;
}

.ar-wider {
    margin-right: 14px;
}

.ar-dim {
    border-top-color: #666666;
}

.ar-dark {
    width: 0;
    height: 0;
    border-style: solid;
    border-width: 4px 4px 0;
    border-color: #333333 transparent transparent;
}

.sep {
    flex: none;
    width: 1px;
    height: 26px;
    margin: 0 5px 0 -2px;
    background-color: #444444;
}

.sep-file {
    margin: 0 4px 0 -4px;
}

.sep-size {
    margin: 0 6px;
}

.sep-fmt {
    margin: 0 5px 0 0;
}

.sep-near {
    margin: 0 2px 0 -3px;
}

.sep-list {
    margin: 0 5px 0 -3px;
}

.combo {
    display: flex;
    align-items: center;
    justify-content: space-between;
    flex: none;
    height: 19px;
    margin-right: 8px;
    padding: 0 7px 0 5px;
    background-color: #e8e8e8;
    border-radius: 3px;
    color: #222222;
}

.combo-none {
    width: 100px;
}

.combo-font {
    width: 150px;
    height: 21px;
}

.combo-size {
    width: 111px;
    margin-right: 0;
}

.fmt {
    flex: none;
    width: 16px;
    height: 18px;
    margin-right: 8px;
    background-color: #cfcfcf;
    border-radius: 2px;
    color: #333333;
    font-family: "Liberation Serif", serif;
    font-size: 13px;
    font-weight: bold;
    line-height: 18px;
    text-align: center;
}

.fmt-i {
    font-style: italic;
}

.fmt-u {
    text-decoration: underline;
}

.al {
    flex: none;
    width: 22px;
    height: 22px;
}

.al-on {
    background-color: #8f8f8f;
    border-radius: 2px;
}

/* main columns */

.main {
    display: grid;
    flex: none;
    grid-template-columns: 249px 1455px 216px;
    height: 921px;
}

.side {
    display: flex;
    flex-direction: column;
    gap: 3px;
    padding-top: 6px;
}

.side-left {
    padding-left: 8px;
    padding-right: 5px;
}

.side-right {
    padding-left: 4px;
    padding-right: 8px;
}

.panel {
    display: flex;
    flex-direction: column;
    height: 453px;
    padding: 4px 3px 3px;
    background-color: black;
    border-radius: 4px;
}

.panel:last-child {
    height: 455px;
}

.panel-tabs {
    display: flex;
    align-items: flex-end;
    flex: none;
    height: 19px;
}

.ptab {
    display: flex;
    align-items: center;
    height: 19px;
    padding-left: 8px;
    padding-top: 2px;
    border-radius: 4px 0 0 0;
    clip-path: polygon(0 0, calc(100% - 18px) 0, 100% 100%, 0 100%);
    letter-spacing: 0;
}

.ptab-on {
    background-color: #5a5a5a;
}

.ptab-off {
    margin-left: 2px;
    background-color: #474747;
}

.ptab-folder {
    width: 77px;
}

.ptab-tagprops {
    width: 108px;
}

.ptab-cssprops {
    width: 110px;
}

.ptab-toolbox {
    width: 73px;
}

.ptab-snippets {
    width: 72px;
}

.ptab-apply {
    width: 80px;
}

.ptab-manage {
    width: 93px;
}

.tab-x {
    margin-left: 4px;
    color: #aaaaaa;
    font-size: 10px;
    font-weight: normal;
}

.ptab-tools {
    display: flex;
    align-items: center;
    gap: 5px;
    height: 19px;
    margin-left: auto;
    padding-right: 1px;
}

.ptab-tools svg {
    width: 9px;
    height: 10px;
}

.panel-body {
    flex: 1;
    min-height: 0;
    background-color: #5a5a5a;
    overflow: hidden;
}

/* folder list */

.folder-top {
    height: 63px;
    padding: 12px 0 0 16px;
    border-bottom: 1px solid #434343;
}

.big-folder {
    width: 28px;
    height: 42px;
}

.grip {
    width: 22px;
    margin: 0 auto;
    border-top: 1px dotted #999999;
}

.tree {
    padding: 5px 0 0 5px;
}

.tree-root,
.tree-row {
    display: flex;
    align-items: center;
    height: 18px;
}

.tree-root {
    height: 18px;
}

.root-label {
    margin-left: 1px;
    padding: 0 3px 0 2px;
    height: 18px;
    background-color: #cdcdcd;
    color: #222222;
    line-height: 18px;
}

.ti {
    flex: none;
    width: 16px;
    height: 16px;
    margin-right: 4px;
}

.tree-row {
    padding-left: 16px;
    position: relative;
}

.tree-root .ti {
    height: 18px;
    width: 14px;
    margin-right: 1px;
}

.expand {
    position: absolute;
    left: 1px;
    top: 5px;
    width: 9px;
    height: 9px;
    background-color: #ececec;
    border: 1px solid #888888;
    color: #111111;
    font-size: 9px;
    font-weight: bold;
    line-height: 7px;
    text-align: center;
}

/* tag properties */

.prop-tools {
    display: flex;
    align-items: center;
    gap: 2px;
    height: 26px;
    margin: 6px 0 0 5px;
}

.pt {
    width: 26px;
    height: 26px;
    background-color: #6b6b6b;
    border: 1px solid #8d8d8d;
}

.pt svg {
    width: 24px;
    height: 24px;
    display: block;
}

.pt-on {
    background-color: #b5d193;
}

.pt-sep {
    width: 1px;
    height: 26px;
    background-color: #222222;
}

.sel-tag {
    height: 24px;
    padding: 4px 0 0 7px;
    font-size: 11.500px;
    letter-spacing: 0;
}

.prop-box {
    display: flex;
    height: 370px;
    margin: 0 2px 0 3px;
    border: 1px solid #a9a9a9;
    background-color: white;
    color: #222222;
    overflow: hidden;
}

.prop-list {
    flex: 1;
    min-width: 0;
}

.group-head {
    display: flex;
    align-items: center;
    height: 17px;
    padding-left: 2px;
    background-color: #e6e6e6;
    color: #111111;
    font-size: 12px;
    font-weight: bold;
    letter-spacing: 0;
}

.minus {
    width: 9px;
    height: 9px;
    margin-right: 8px;
    border: 1px solid #555555;
    font-size: 10px;
    font-weight: normal;
    line-height: 6px;
    text-align: center;
}

.prow {
    display: grid;
    grid-template-columns: 106px 1fr;
    height: 17px;
    border-bottom: 1px solid #555555;
}

.pname {
    display: flex;
    align-items: center;
    padding-left: 15px;
    border-right: 1px solid #555555;
    font-size: 11.500px;
    white-space: nowrap;
}

.pname svg {
    flex: none;
    width: 17px;
    height: 13px;
    margin-right: 2px;
}

.set {
    color: #57792c;
    font-weight: bold;
}

.pval {
    padding-left: 2px;
    font-size: 11px;
    line-height: 16px;
}

.swatch {
    display: block;
    width: 20px;
    height: 14px;
    margin: 1px 0 0 0;
    background-color: white;
    border: 1px solid #666666;
}

/* scrollbars */

.vbar {
    display: flex;
    flex-direction: column;
    align-items: center;
    flex: none;
    background-color: #404040;
}

.vbar .up,
.vbar .down {
    flex: none;
    width: 0;
    height: 0;
    border-style: solid;
}

.vbar .up {
    margin-top: 5px;
    border-width: 0 5px 6px;
    border-color: transparent transparent #808080;
}

.vbar .down {
    margin-top: auto;
    margin-bottom: 5px;
    border-width: 6px 5px 0;
    border-color: #808080 transparent transparent;
}

.thumb {
    flex: none;
    width: 8px;
    background-color: #808080;
    border-radius: 4px;
}

.vbar-prop {
    width: 17px;
}

.vbar-prop .thumb {
    height: 172px;
    margin-top: 6px;
}

.vbar-editor {
    width: 14px;
}

.vbar-editor .up {
    margin-top: 4px;
}

.vbar-editor .thumb {
    height: 254px;
    margin-top: 527px;
}

.vbar-toolbox {
    width: 17px;
    height: 100%;
}

.vbar-toolbox .thumb {
    height: 280px;
    margin-top: 7px;
    width: 9px;
}

.vbar-css {
    width: 17px;
}

.vbar-css .thumb {
    height: 102px;
    margin-top: 6px;
}

/* centre */

.editor {
    display: flex;
    flex-direction: column;
    height: 906px;
    margin-top: 9px;
    margin-right: 0;
    border-right: 1px solid black;
    border-radius: 0 0 4px 4px;
}

.doc-tabs {
    display: flex;
    align-items: flex-end;
    flex: none;
    gap: 9px;
    height: 25px;
    padding-left: 1px;
    border-bottom: 1px solid black;
}

.doc-tab {
    display: flex;
    align-items: center;
    flex: none;
    height: 24px;
    padding: 0 5px;
    background-color: #474747;
    border-radius: 3px 3px 0 0;
    font-size: 12px;
    white-space: nowrap;
}

.doc-tab:first-child {
    width: 56px;
}

.doc-tab-on {
    width: 87px;
    background-color: #5a5a5a;
}

.crumbs {
    display: flex;
    align-items: center;
    flex: none;
    gap: 5px;
    height: 25px;
    padding-left: 3px;
    padding-right: 14px;
    background-color: #5a5a5a;
}

.crumb {
    display: flex;
    align-items: center;
    height: 18px;
    padding: 0 2px;
    border: 1px solid #808080;
    color: #8c8c8c;
    font-size: 12px;
    letter-spacing: -0.3px;
    white-space: nowrap;
}

.crumb-tr {
    padding: 0 3.500px;
}

.crumb-arrow,
.crumb-end {
    justify-content: center;
    width: 10px;
}

.crumb-arrow {
    margin-right: 2px;
}

.crumb-arrow::after {
    content: "";
    border-style: solid;
    border-width: 3px 4px 3px 0;
    border-color: transparent #8c8c8c transparent transparent;
}

.crumb-end::after {
    content: "";
    border-style: solid;
    border-width: 3px 0 3px 4px;
    border-color: transparent transparent transparent #8c8c8c;
}

.crumb-on {
    border-color: #a8a8a8;
    color: white;
}

.crumb-sel {
    background-color: #2e2e2e;
    border-color: black;
    color: white;
}

.crumb-end {
    margin-left: auto;
}

.template-row {
    flex: none;
    height: 16px;
    padding-right: 1px;
    background-color: #eaeaea;
    color: #1c1ccf;
    font-size: 12px;
    letter-spacing: -0.2px;
    text-align: right;
}

.template-row span {
    display: block;
    line-height: 16px;
}

.work {
    display: flex;
    flex: none;
    height: 819px;
}

.canvas {
    width: 1437px;
    padding-left: 10px;
    background-color: #e3e3e3;
}

.page {
    width: 1417px;
}

.frame {
    display: grid;
    grid-template-columns: 628px 776px;
    grid-template-rows: 389px 206px;
    column-gap: 1px;
    row-gap: 2px;
    width: 1417px;
    background-color: #c49f8b;
    background-image: linear-gradient(#f2b27a, #f2b27a), linear-gradient(#f2b27a, #f2b27a), linear-gradient(#f2b27a, #f2b27a);
    background-repeat: no-repeat;
    background-size: 3px 100%, 3px 100%, 1413px 3px;
    background-position: 2px 0, 1412px 0, 2px 100%;
    padding-left: 6px;
    padding-right: 5px;
    padding-bottom: 4px;
}

.cell {
    border: 1px solid white;
    position: relative;
}

.cell-top-left,
.cell-top-right {
    border-top: 0;
}

.white-block {
    width: 574px;
    height: 36px;
    margin-left: 1px;
    background-color: white;
}

.embed {
    width: 714px;
    height: 116px;
    margin-left: 29px;
    border-left: 1px solid #555555;
    border-right: 1px dashed black;
    border-bottom: 1px dashed black;
    background-color: #ececec;
}

.embed-row {
    display: flex;
    height: 98px;
}

.embed-video {
    flex: 1;
    background-color: black;
    position: relative;
}

.embed-line {
    position: absolute;
    left: 0;
    right: 0;
    top: 45px;
    height: 1px;
    background-color: #bdbdbd;
}

.embed-vbar {
    display: flex;
    align-items: flex-end;
    width: 16px;
    background-color: #cdcdcd;
}

.embed-hbar {
    display: flex;
    height: 17px;
}

.embed-btn {
    display: flex;
    align-items: center;
    justify-content: center;
    flex: none;
    width: 16px;
    height: 16px;
    background-color: #ececec;
}

.embed-btn svg {
    width: 10px;
    height: 10px;
}

.embed-track {
    flex: 1;
    background-color: #cdcdcd;
}

.embed-corner {
    width: 17px;
}

.cell-about {
    display: flex;
    align-items: center;
    justify-content: center;
    padding-left: 3px;
    color: #54423a;
    font-family: "Liberation Serif", serif;
    font-size: 19px;
    font-weight: bold;
    letter-spacing: 1.600px;
    -webkit-text-stroke: 0.4px #54423a;
}

.cell-text {
    display: flex;
    align-items: center;
    padding-left: 1px;
    padding-top: 2px;
    outline: 1px dotted #6d7f9a;
    outline-offset: 2px;
}

.cell-text p {
    margin: 0;
    color: #5a4335;
    font-family: "Liberation Serif", serif;
    font-size: 22px;
    letter-spacing: 0.260px;
    line-height: 27px;
}

.cell-badge {
    position: absolute;
    left: -2px;
    top: -18px;
    height: 14px;
    padding: 0 1px;
    background-color: white;
    border: 1px solid #5f87bb;
    color: #111111;
    font-size: 11px;
    letter-spacing: 0;
    line-height: 12px;
}

/* footer of the edited page */

.footer {
    height: 178px;
    background-color: #574338;
    color: #e9e4dc;
    text-align: center;
}

.brand {
    height: 51px;
    margin: 0;
    padding-top: 12px;
    font-size: 32px;
    font-weight: 300;
    letter-spacing: 0;
    line-height: 36px;
}

.brand span {
    display: inline-block;
    margin-left: 24px;
    transform: scaleX(0.717);
}

.contact {
    height: 19px;
    font-family: "Liberation Serif", serif;
    font-size: 16px;
    font-weight: bold;
    letter-spacing: 1.200px;
    line-height: 19px;
    -webkit-text-stroke: 0.3px;
}

.contact a {
    color: #1d1dc9;
}

.num {
    letter-spacing: 3px;
}

.socials {
    display: grid;
    grid-template-columns: 377px 307px 368px 1fr;
    height: 50px;
    margin-top: 12px;
    padding-left: 8px;
    text-align: left;
}

.social {
    display: flex;
    align-items: flex-end;
    color: #ab8a78;
    font-family: "Liberation Serif", serif;
    font-size: 16px;
    font-weight: bold;
    letter-spacing: 1.500px;
    -webkit-text-stroke: 0.3px;
}

.social span {
    margin-left: 3px;
    margin-bottom: -3px;
    line-height: 14px;
}

.social-twitter span {
    margin-left: 0;
}

.logo {
    flex: none;
    width: 50px;
    height: 50px;
}

.logo-ig {
    flex: none;
    width: 44px;
    height: 44px;
    margin-bottom: 3px;
}

.view-bar {
    display: flex;
    align-items: center;
    flex: 1;
    padding-right: 20px;
    border-bottom: 1px solid black;
}

.view {
    display: flex;
    align-items: center;
    justify-content: center;
    height: 100%;
    padding: 1px 10px 0;
    border-right: 1px solid #333333;
    background-color: #444444;
    font-size: 12px;
}

.view-on {
    background-color: #5a5a5a;
}

.tri-left {
    margin-left: 6px;
    border-style: solid;
    border-width: 4px 5px 4px 0;
    border-color: transparent black transparent transparent;
}

.tri-right {
    margin-left: auto;
    border-style: solid;
    border-width: 4px 0 4px 5px;
    border-color: transparent transparent transparent black;
}

/* toolbox */

.toolbox-body {
    display: flex;
}

.toolbox-list {
    flex: 1;
}

.tb-head {
    display: flex;
    align-items: center;
    height: 19px;
    color: #efefef;
    font-size: 11.500px;
    font-weight: bold;
    letter-spacing: 0;
}

.tb-head-html {
    padding-left: 5px;
}

.tb-head-sub {
    padding-left: 15px;
}

.tb-head-form {
    margin-top: 9px;
    margin-bottom: 1px;
}

.tree-tri {
    width: 0;
    height: 0;
    margin-right: 5px;
    border-style: solid;
    border-width: 5px 4px 0;
    border-color: #bbbbbb transparent transparent;
}

.tb-row {
    display: flex;
    align-items: center;
    height: 20px;
    padding-left: 24px;
    font-size: 11px;
    white-space: nowrap;
}

.tb-row svg {
    flex: none;
    width: 16px;
    height: 14px;
    margin-right: 2px;
}

.tb-row-in svg {
    margin-right: 5px;
}

/* manage styles */

.manage-body {
    padding: 6px 2px 0 2px;
}

.manage-top {
    display: flex;
    align-items: center;
    justify-content: space-between;
    height: 22px;
    padding: 0 3px 0 5px;
}

.link-blue {
    color: #7db4dc;
    font-size: 11px;
}

.options-btn {
    display: flex;
    align-items: center;
    justify-content: center;
    gap: 7px;
    width: 73px;
    height: 22px;
    border: 1px solid #a0a0a0;
    letter-spacing: 0;
}

.options-btn .ar {
    margin: 0;
}

.attach {
    display: flex;
    align-items: center;
    gap: 5px;
    height: 24px;
    margin-top: 2px;
    padding-left: 5px;
}

.attach svg {
    width: 16px;
    height: 16px;
}

.mini-head {
    height: 14px;
    margin-top: 8px;
    padding-left: 5px;
    color: #efefef;
    font-size: 11px;
    font-weight: bold;
    letter-spacing: 0;
    line-height: 14px;
}

.css-box {
    display: flex;
    height: 251px;
    margin-top: 2px;
    border: 1px solid #a9a9a9;
    background-color: white;
    color: #222222;
    overflow: hidden;
}

.css-list {
    flex: 1;
    overflow: hidden;
}

.group-head-css {
    height: 16px;
}

.css-row {
    display: flex;
    align-items: center;
    height: 16px;
    padding-left: 16px;
    font-size: 12px;
    letter-spacing: 0;
}

.css-row svg {
    flex: none;
    width: 16px;
    height: 16px;
    margin-right: 1px;
}

.group-head-css + .css-row {
    margin-top: 2px;
}

.css-row + .group-head-css {
    margin-top: 2px;
}

.mini-head-preview {
    margin-top: 8px;
}

.preview-box {
    height: 75px;
    margin-top: 1px;
    background-color: white;
    border: 1px solid #a9a9a9;
}

/* status bar */

.status-bar {
    display: flex;
    align-items: center;
    flex: none;
    height: 28px;
    margin: 0 8px 5px 5px;
    padding: 1px 8px 0;
    background-color: black;
    border-radius: 5px;
    font-size: 12px;
    letter-spacing: -0.1px;
}

.status-url {
    margin-right: auto;
}

.status-sep {
    flex: none;
    width: 1px;
    height: 20px;
    margin-right: 11px;
    background-color: white;
}

.status-sep-b {
    margin-left: 2px;
}

.st-ic {
    flex: none;
    width: 16px;
    height: 16px;
    margin-right: 5px;
}

.st-warn {
    margin-left: 8px;
}

.st-text {
    white-space: nowrap;
}

.st-xhtml {
    margin-left: 8px;
}

.st-size {
    margin-left: 6px;
}

.st-box {
    margin-left: 7px;
}

.st-css {
    margin-left: 12px;
}

.st-dim {
    margin-left: 11px;
    margin-right: 3px;
}

.ar-last {
    margin-right: 0;
}

/* windows taskbar */

.task-bar {
    display: flex;
    align-items: center;
    flex: none;
    height: 40px;
    background: linear-gradient(90deg, #2a4050, #1c2a42);
}

.start {
    width: 16px;
    height: 16px;
    margin: 0 16px;
}

.search {
    display: flex;
    align-items: center;
    width: 344px;
    height: 40px;
    padding-left: 12px;
    background-color: #f1f1f1;
    border-top: 1px solid #cccccc;
    color: #333333;
    font-size: 14px;
    letter-spacing: 0;
}

.search svg {
    width: 16px;
    height: 16px;
    margin-right: 12px;
}

.task-view {
    width: 16px;
    height: 20px;
    margin: 0 0 0 16px;
}

.apps {
    display: flex;
    margin-left: 19px;
}

.app {
    display: flex;
    align-items: center;
    justify-content: center;
    width: 49px;
    height: 40px;
    position: relative;
}

.app svg {
    width: 24px;
    height: 24px;
}

.app-run::after {
    content: "";
    position: absolute;
    left: 4px;
    right: 4px;
    bottom: 0;
    height: 2px;
    background-color: #79b6e3;
}

.app-active {
    background-color: #4a5b6a;
}

.tray {
    display: flex;
    align-items: center;
    gap: 8px;
    margin-left: auto;
    padding-right: 10px;
}

.tray svg {
    width: 16px;
    height: 16px;
}

.clock {
    display: flex;
    flex-direction: column;
    align-items: center;
    margin-left: -2px;
    font-size: 12px;
    letter-spacing: 0;
    line-height: 18px;
}
```
